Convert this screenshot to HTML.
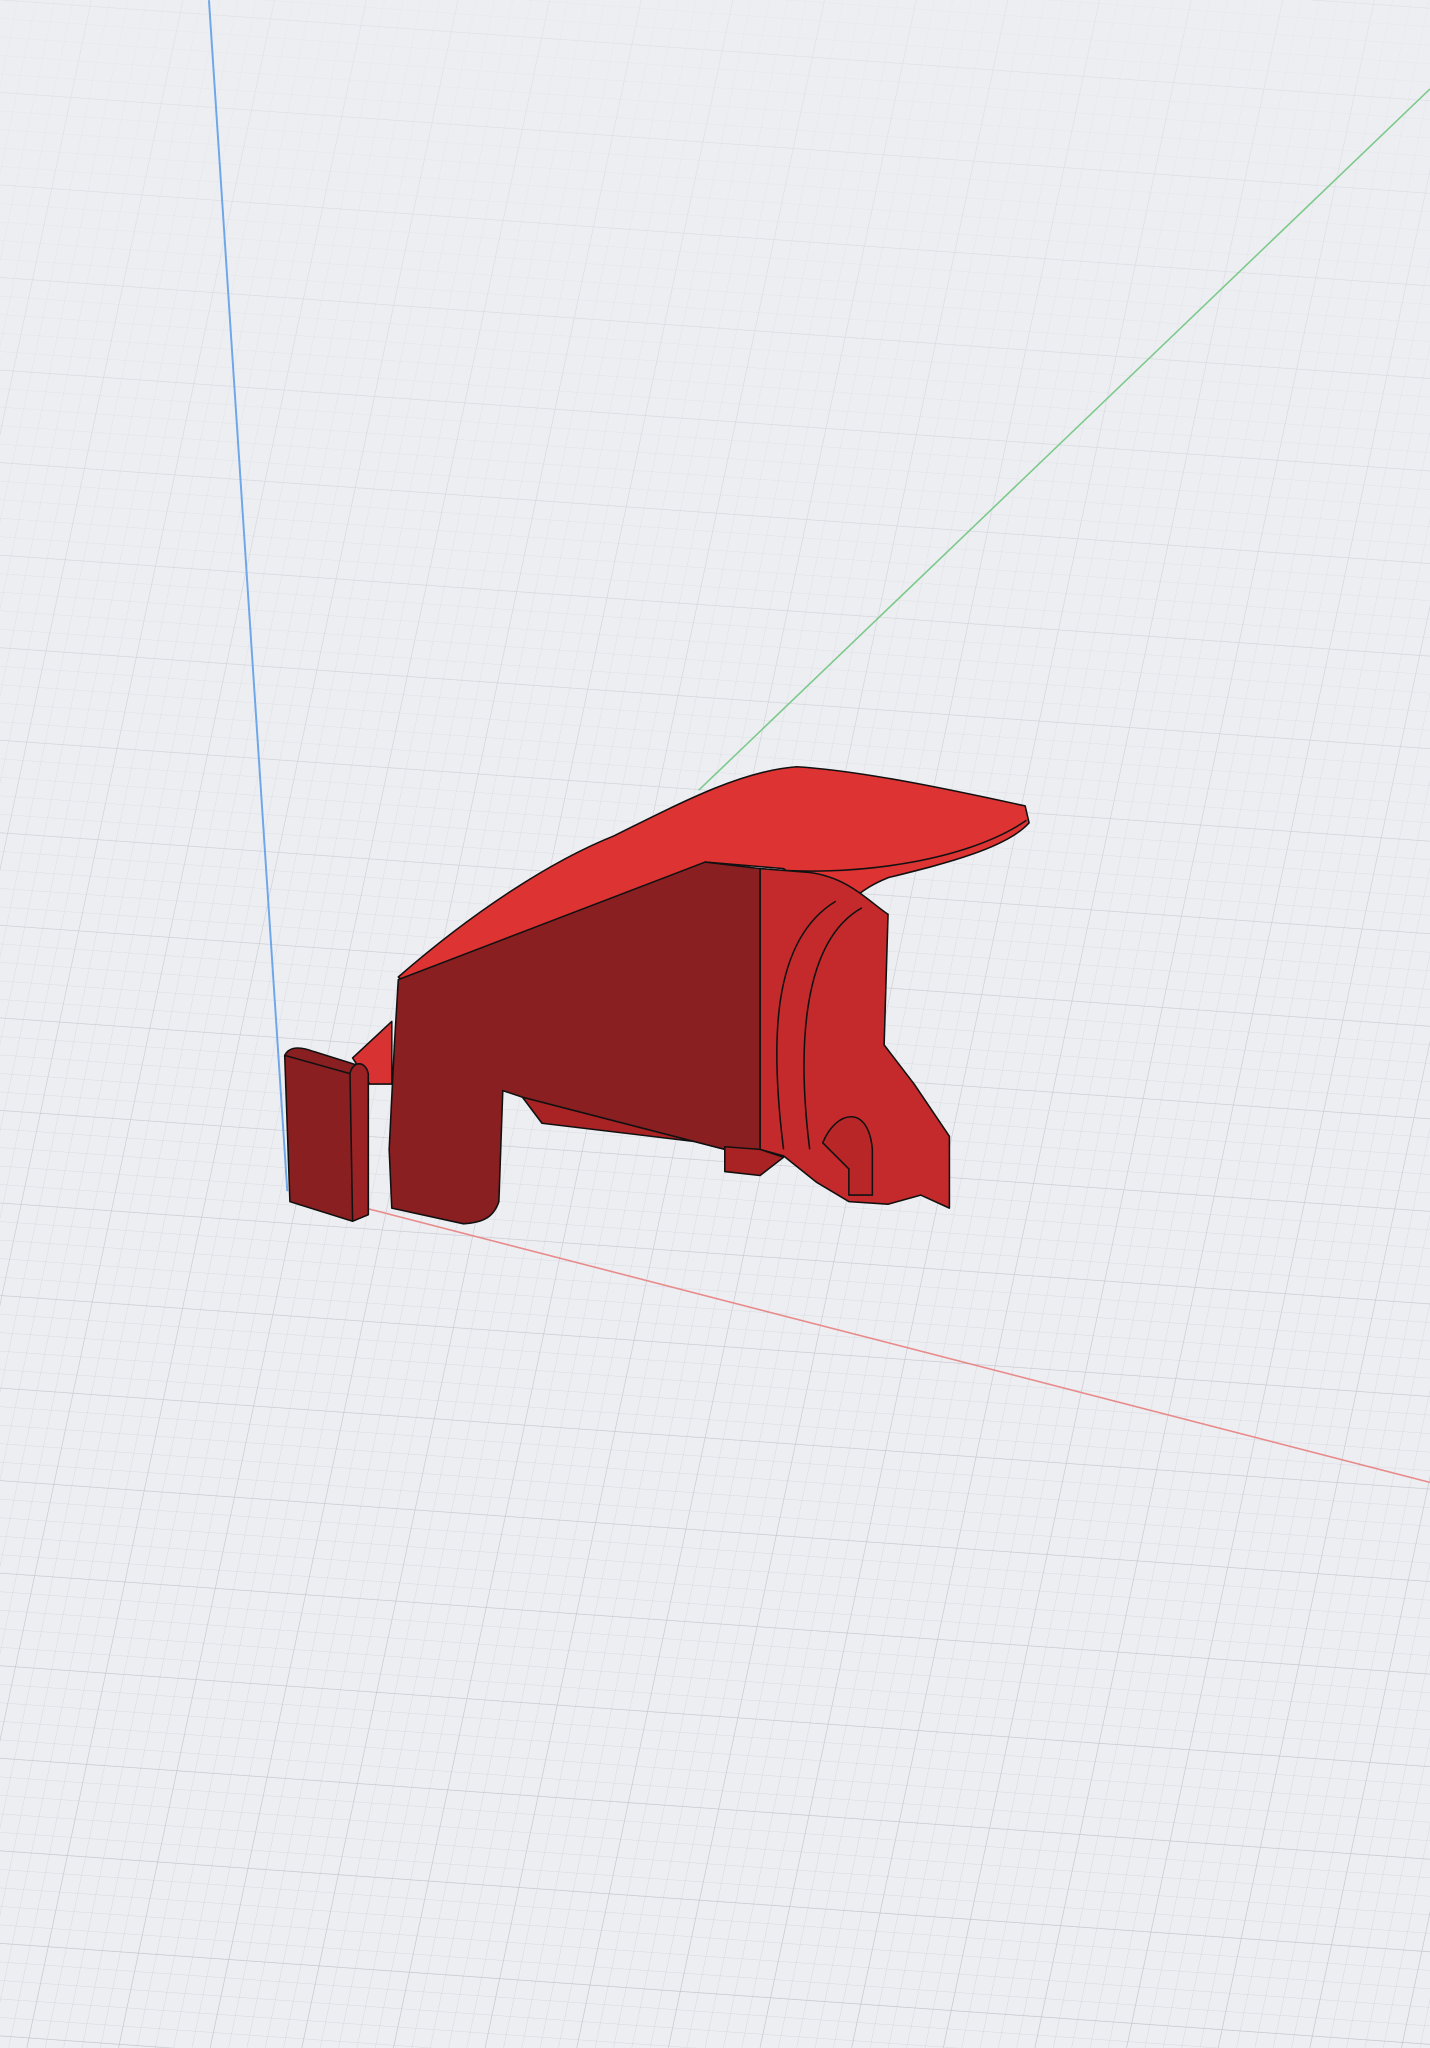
<!DOCTYPE html>
<html><head><meta charset="utf-8"><style>
html,body{margin:0;padding:0;background:#edeef2;}
svg{display:block}
</style></head><body>
<svg width="1430" height="2048" viewBox="0 0 1095 1568" xmlns="http://www.w3.org/2000/svg">
<defs>
<pattern id="g" width="14" height="14" patternUnits="userSpaceOnUse" patternTransform="skewX(-8) rotate(4)">
<path d="M14 0V14M0 14H14" stroke="#cfd1d8" stroke-width="0.6" fill="none"/>
</pattern>
<pattern id="G" width="70" height="70" patternUnits="userSpaceOnUse" patternTransform="skewX(-8) rotate(4)">
<path d="M70 0V70M0 70H70" stroke="#c2c4cc" stroke-width="0.9" fill="none"/>
</pattern>
<linearGradient id="fade" x1="0" y1="0" x2="0" y2="1">
<stop offset="0" stop-color="#edeef2" stop-opacity="0.7"/>
<stop offset="0.5" stop-color="#edeef2" stop-opacity="0.2"/>
<stop offset="1" stop-color="#edeef2" stop-opacity="0"/>
</linearGradient>
</defs>
<rect width="1095" height="1568" fill="#edeef2"/>
<rect width="1095" height="1568" fill="url(#g)"/>
<rect width="1095" height="1568" fill="url(#G)"/>
<rect width="1095" height="1568" fill="url(#fade)"/>
<line x1="160" y1="0" x2="220" y2="912" stroke="#6ea6ea" stroke-width="1.5"/>
<line x1="1095" y1="68" x2="535" y2="605" stroke="#7cc98a" stroke-width="1.2"/>
<line x1="280" y1="925" x2="1095" y2="1135" stroke="#e88a8a" stroke-width="1.2"/>
<g stroke="#111" stroke-width="1.2" stroke-linejoin="round">
<!-- top surface -->
<path d="M305 748 C360 700 420 660 470 640 C530 610 570 590 610 587 C660 590 730 605 785 617 L788 630 C770 650 720 662 680 672 C660 680 650 690 645 700 L600 665 L540 660 L310 752 Z" fill="#de3333"/>
<path d="M582 665 C650 672 740 660 786 628" fill="none"/>
<!-- right part -->
<path d="M582 665 L620 668 C650 672 665 690 680 700 L677 800 L700 830 L727 870 L727 925 L705 915 L680 922 L650 920 L625 905 L600 885 L582 880 Z" fill="#c42a2b"/>
<path d="M600 880 C590 800 590 720 640 690" fill="none"/>
<path d="M620 880 C610 800 615 720 660 695" fill="none"/>
<path d="M630 875 C640 850 665 845 668 880 L668 915 L650 915 L650 895 Z" fill="#b82628"/>
<!-- bottom strip -->
<path d="M400 840 L555 880 L555 897 L582 900 L600 886 L582 880 L415 860 Z" fill="#a92325"/>
<!-- dark front face -->
<path d="M305 750 L540 660 L582 665 L582 880 L555 878 L555 880 L400 840 L385 835 L382 920 C378 932 370 936 355 937 L300 925 L298 880 L302 800 Z" fill="#8a1f21"/>
<!-- left tab -->
<path d="M300 782 L270 810 L283 830 L300 830 Z" fill="#d83232"/>
<path d="M218 808 C222 800 232 802 240 805 L272 815 L282 830 L282 930 L270 935 L222 920 Z" fill="#8a1f21"/>
<path d="M218 808 L268 822" fill="none"/>
<path d="M268 822 C270 812 280 812 282 822 L282 930 L270 935 Z" fill="#9b2224"/>
</g>
</svg>
</body></html>
